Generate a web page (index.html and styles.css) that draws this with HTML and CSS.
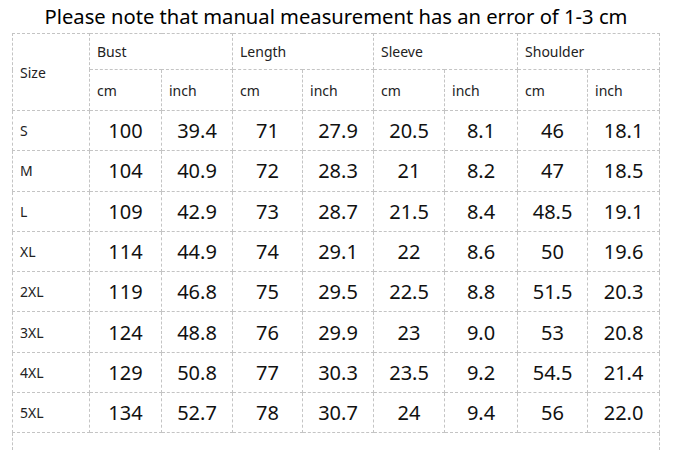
FILE: index.html
```html
<!DOCTYPE html>
<html>
<head>
<meta charset="utf-8">
<link rel="stylesheet" href="styles.css">
</head>
<body>
<div class="page">
  <h1 class="title">Please note that manual measurement has an error of 1-3 cm</h1>
  <table class="chart">
    <colgroup>
      <col class="c-size">
      <col class="c72"><col class="c71"><col class="c70"><col class="c71">
      <col class="c71"><col class="c73"><col class="c70"><col class="c72">
    </colgroup>
    <thead>
      <tr class="h1">
        <td rowspan="2" class="lbl">Size</td>
        <td colspan="2" class="lbl">Bust</td>
        <td colspan="2" class="lbl">Length</td>
        <td colspan="2" class="lbl">Sleeve</td>
        <td colspan="2" class="lbl">Shoulder</td>
      </tr>
      <tr class="h2">
        <td class="lbl">cm</td><td class="lbl">inch</td>
        <td class="lbl">cm</td><td class="lbl">inch</td>
        <td class="lbl">cm</td><td class="lbl">inch</td>
        <td class="lbl">cm</td><td class="lbl">inch</td>
      </tr>
    </thead>
    <tbody>
      <tr><td class="lbl">S</td><td>100</td><td>39.4</td><td>71</td><td>27.9</td><td>20.5</td><td>8.1</td><td>46</td><td>18.1</td></tr>
      <tr><td class="lbl">M</td><td>104</td><td>40.9</td><td>72</td><td>28.3</td><td>21</td><td>8.2</td><td>47</td><td>18.5</td></tr>
      <tr><td class="lbl">L</td><td>109</td><td>42.9</td><td>73</td><td>28.7</td><td>21.5</td><td>8.4</td><td>48.5</td><td>19.1</td></tr>
      <tr><td class="lbl">XL</td><td>114</td><td>44.9</td><td>74</td><td>29.1</td><td>22</td><td>8.6</td><td>50</td><td>19.6</td></tr>
      <tr><td class="lbl">2XL</td><td>119</td><td>46.8</td><td>75</td><td>29.5</td><td>22.5</td><td>8.8</td><td>51.5</td><td>20.3</td></tr>
      <tr><td class="lbl">3XL</td><td>124</td><td>48.8</td><td>76</td><td>29.9</td><td>23</td><td>9.0</td><td>53</td><td>20.8</td></tr>
      <tr><td class="lbl">4XL</td><td>129</td><td>50.8</td><td>77</td><td>30.3</td><td>23.5</td><td>9.2</td><td>54.5</td><td>21.4</td></tr>
      <tr><td class="lbl">5XL</td><td>134</td><td>52.7</td><td>78</td><td>30.7</td><td>24</td><td>9.4</td><td>56</td><td>22.0</td></tr>
      <tr class="foot"><td colspan="9"></td></tr>
    </tbody>
  </table>
</div>
</body>
</html>
```

FILE: styles.css
```css
html, body {
  margin: 0;
  padding: 0;
  background: #fff;
}
.page {
  padding-left: 12px;
  font-family: "Noto Sans", "Open Sans", "Liberation Sans", sans-serif;
  color: #111;
}
.title {
  margin: 0;
  width: 648px;
  height: 33px;
  line-height: 33px;
  font-size: 20.2px;
  font-weight: 400;
  text-align: center;
  color: #000;
}
.chart {
  width: 648px;
  table-layout: fixed;
  border-collapse: collapse;
}
.c-size { width: 77px; }
.c70 { width: 70px; }
.c71 { width: 71px; }
.c72 { width: 72px; }
.c73 { width: 73px; }
.chart td {
  border: 1px dashed #c4c4c4;
  padding: 0;
  text-align: center;
  vertical-align: middle;
  font-size: 20px;
  color: #111;
  height: 39.3px;
}
.chart td.lbl {
  text-align: left;
  padding-left: 7px;
  font-size: 14px;
  color: #222;
}
.chart .h1 td { height: 35px; }
.chart .h2 td { height: 40px; }
.chart .foot td { height: 30px; }
```
